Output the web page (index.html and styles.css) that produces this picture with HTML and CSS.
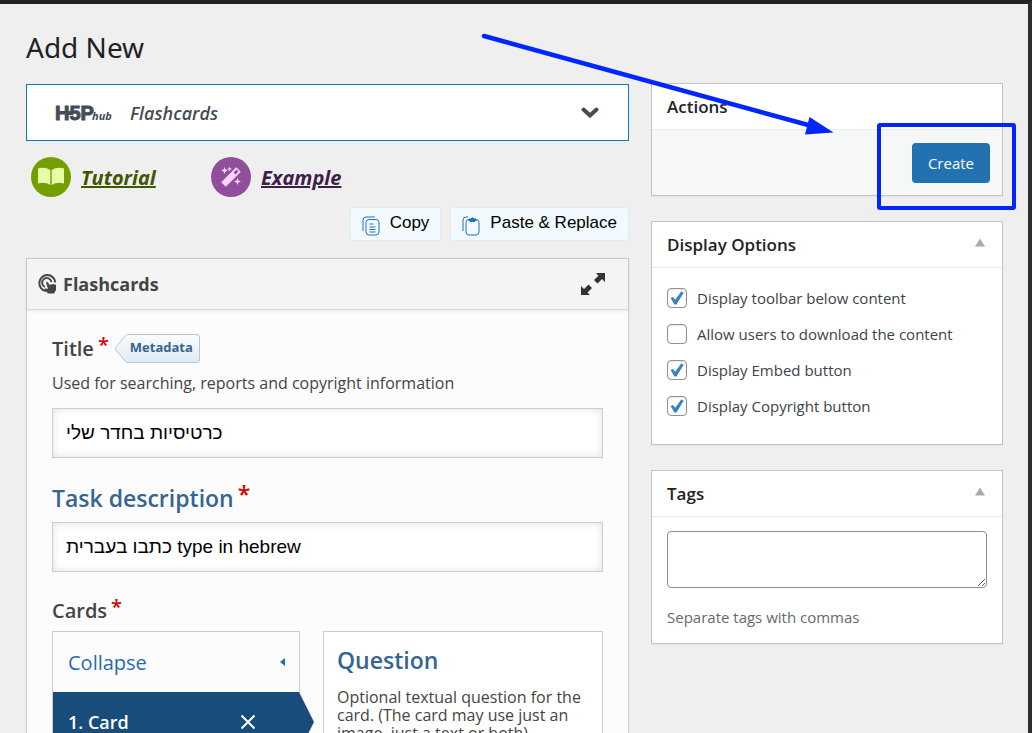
FILE: index.html
```html
<!DOCTYPE html>
<html lang="en">
<head>
    <meta charset="UTF-8">
    <meta name="viewport" content="width=device-width, initial-scale=1.0">
    <title>Add New</title>
    <link rel="stylesheet" href="styles.css">
</head>
<body>
    <div class="wrap">
        <h1>Add New</h1>
        <div class="columns">
            <main class="editor">
                <button class="hub" type="button">
                    <svg class="hub-logo" width="60" height="28" viewBox="0 0 60 28">
                        <path d="M11 12h7v4h-7z" fill="#454c57"/>
                        <text class="logo-big" x="0" y="21">H5P</text>
                        <text class="logo-hub" x="37" y="21">hub</text>
                    </svg>
                    <span class="hub-name">Flashcards</span>
                    <svg width="18" height="12" viewBox="0 0 18 12">
                        <path d="M2.500 2.500L9 8.500L15.500 2.500" fill="none" stroke="#454c57" stroke-width="4" stroke-linecap="round"/>
                    </svg>
                </button>

                <div class="help-links">
                    <a class="tutorial" href="#">
                        <svg width="40" height="40" viewBox="0 0 40 40">
                            <circle cx="20" cy="20" r="20" fill="#739f00"/>
                            <path d="M7 11.500Q14 9.500 19.300 13V28Q14 24.500 7 26.500ZM33 11.500Q26 9.500 20.700 13V28Q26 24.500 33 26.500Z" fill="#e6ffa6"/>
                        </svg>
                        <span>Tutorial</span>
                    </a>
                    <a class="example" href="#">
                        <svg width="40" height="40" viewBox="0 0 40 40">
                            <circle cx="20" cy="20" r="20" fill="#914f9b"/>
                            <path d="M12.500 27.500L27.500 12.500" stroke="#fad6ff" stroke-width="6.500"/>
                            <path d="M23.500 16.500L26.500 13.500" stroke="#914f9b" stroke-width="2.500"/>
                            <path d="M13.500 10l1 2.500 2.500 1-2.500 1-1 2.500-1-2.500-2.500-1 2.500-1zM18.500 9.500l.700 1.800 1.800.700-1.800.700-.700 1.800-.700-1.800-1.800-.700 1.800-.700zM26.500 21l1 2.500 2.500 1-2.500 1-1 2.500-1-2.500-2.500-1 2.500-1z" fill="#fad6ff"/>
                        </svg>
                        <span>Example</span>
                    </a>
                </div>

                <div class="clipboard">
                    <button type="button">
                        <svg width="18" height="20" viewBox="0 0 18 20" fill="none" stroke="#2371b5">
                            <path d="M1 15V4Q1 1 4 1H13"/>
                            <rect x="4" y="3.500" width="13" height="15.500" rx="3"/>
                            <path d="M7.500 8h4M7.500 11h6M7.500 13.500h6M7.500 16h6"/>
                        </svg>
                        <span>Copy</span>
                    </button>
                    <button type="button">
                        <svg width="18" height="20" viewBox="0 0 18 20" fill="none" stroke="#2371b5">
                            <path d="M1 15V4Q1 1 4 1H6"/>
                            <rect x="4" y="3.500" width="13" height="15.500" rx="3"/>
                            <path d="M7 3h2q1.500-2.500 3 0h2v1.500l-1 1H8l-1-1z" fill="#2371b5"/>
                        </svg>
                        <span>Paste &amp; Replace</span>
                    </button>
                </div>

                <section class="panel">
                    <header class="panel-header">
                        <svg width="20" height="20" viewBox="0 0 20 20" fill="none" stroke="#444" stroke-width="2">
                            <path d="M8 17A8 8 0 1 1 17.300 8.500"/>
                            <path d="M7 13A4.700 4.700 0 1 1 13.500 8" stroke-width="1.800"/>
                            <path d="M8 8.500q1-1.500 2 0l2 3 1-1.500 1.500.500 1-.700 1.200.900 1.300-.200V16l-2 3.500H10L6.500 15.500q0-1.500 1.500-1l2 .500z" fill="#444" stroke="none"/>
                        </svg>
                        <h2>Flashcards</h2>
                        <button class="fullscreen" type="button" aria-label="Fullscreen">
                            <svg width="24" height="24" viewBox="0 0 24 24" fill="#333">
                                <path d="M15 1h9v9l-3-3-4.500 4.500-3.500-3.500L17.500 3.700zM9 23H0v-9l3 3 4.500-4.500L11 16l-4.500 4.500z"/>
                            </svg>
                        </button>
                    </header>

                    <div class="panel-body">
                        <div class="field">
                            <div class="label-row">
                                <label for="title">Title<span class="required">*</span></label>
                                <button class="metadata" type="button">
                                    <svg width="13" height="29" viewBox="0 0 13 29">
                                        <defs>
                                            <linearGradient id="tag" x2="0" y2="1">
                                                <stop offset="0" stop-color="#fbfcfd"/>
                                                <stop offset="1" stop-color="#dfeaf2"/>
                                            </linearGradient>
                                        </defs>
                                        <path d="M13 .500Q11.500 .500 10.500 1.500L1 13Q0 14.500 1 16L10.500 27.500Q11.500 28.500 13 28.500" fill="url(#tag)" stroke="#b4c8d8"/>
                                    </svg>
                                    <span>Metadata</span>
                                </button>
                            </div>
                            <p class="description">Used for searching, reports and copyright information</p>
                            <input id="title" type="text" value="כרטיסיות בחדר שלי">
                        </div>

                        <div class="field">
                            <label class="important" for="task">Task description<span class="required">*</span></label>
                            <input id="task" type="text" value="כתבו בעברית type in hebrew">
                        </div>

                        <div class="field">
                            <h3>Cards<span class="required">*</span></h3>
                            <div class="cards">
                                <div class="card-list">
                                    <button class="collapse" type="button">
                                        Collapse
                                        <svg width="5" height="8" viewBox="0 0 5 8"><path d="M5 0v8L0 4z" fill="#1f6db3"/></svg>
                                    </button>
                                    <div class="card-tab">
                                        <span>1. Card</span>
                                        <button type="button" aria-label="Remove card">
                                            <svg width="16" height="16" viewBox="0 0 16 16"><path d="M1.500 1.500l13 13M14.500 1.500l-13 13" stroke="#fff" stroke-width="2"/></svg>
                                        </button>
                                    </div>
                                </div>
                                <div class="card-form">
                                    <h4>Question</h4>
                                    <p class="description">Optional textual question for the card. (The card may use just an image, just a text or both)</p>
                                </div>
                            </div>
                        </div>
                    </div>
                </section>
            </main>

            <aside class="sidebar">
                <section class="postbox actions">
                    <h2>Actions</h2>
                    <div class="action-bar">
                        <button class="create" type="button">Create</button>
                    </div>
                    <!-- arrow and frame pointing at the Create button -->
                    <svg class="callout" width="540" height="182" viewBox="0 0 540 182">
                        <path d="M4 4L330 93.500" stroke="#0026ff" stroke-width="4.500" stroke-linecap="round"/>
                        <path d="M329.500 85L353.500 100.500L325 102.500Z" fill="#0026ff"/>
                        <rect x="399" y="93" width="135" height="83" rx="1" fill="none" stroke="#0026ff" stroke-width="4"/>
                    </svg>
                </section>

                <section class="postbox">
                    <h2>Display Options <button class="toggle" type="button" aria-label="Toggle panel"></button></h2>
                    <div class="options">
                        <label><input type="checkbox" checked> Display toolbar below content</label>
                        <label><input type="checkbox"> Allow users to download the content</label>
                        <label><input type="checkbox" checked> Display Embed button</label>
                        <label><input type="checkbox" checked> Display Copyright button</label>
                    </div>
                </section>

                <section class="postbox">
                    <h2>Tags <button class="toggle" type="button" aria-label="Toggle panel"></button></h2>
                    <div class="tags">
                        <textarea id="tags" aria-label="Tags"></textarea>
                        <label class="howto" for="tags">Separate tags with commas</label>
                    </div>
                </section>
            </aside>
        </div>
    </div>
</body>
</html>
```
FILE: styles.css
```css
* {
    box-sizing: border-box;
}

body {
    margin: 0;
    height: 100vh;
    overflow: hidden;
    background-color: #efefef;
    color: #3c434a;
    font-family: "Open Sans", "Noto Sans", sans-serif;
    border-top: 4px solid #1d2327;
    border-right: 4px solid #2b2d2f;
}

button {
    font-family: inherit;
    cursor: pointer;
}

svg {
    flex: none;
}

h1, h2, h3, h4, p {
    margin: 0;
}

.wrap {
    padding: 23px 25px 0 26px;
}

h1 {
    color: #1d2327;
    font-family: "Noto Sans", sans-serif;
    font-size: 28px;
    font-weight: 400;
    line-height: 40px;
    margin-bottom: 16px;
}

.columns {
    display: grid;
    grid-template-columns: minmax(0, 1fr) 352px;
    gap: 22px;
    align-items: start;
}

/* Content type selector */
.hub {
    display: flex;
    align-items: center;
    width: 100%;
    height: 57px;
    margin-top: 1px;
    padding: 0 29px 0 28px;
    background-color: #fff;
    border: 1px solid #0a78d1;
}

.hub-logo {
    overflow: visible;
}

.logo-big, .logo-hub {
    fill: #454c57;
    font-family: "Liberation Sans", Arial, sans-serif;
    font-weight: 700;
    font-size: 20px;
}

.logo-big {
    stroke: #454c57;
    stroke-width: 1px;
}

.logo-hub {
    font-family: "Open Sans", sans-serif;
    font-size: 11px;
    font-style: italic;
}

.hub-name {
    flex: 1;
    margin-left: 15px;
    color: #454c57;
    font-size: 18px;
    font-style: italic;
    font-weight: 600;
    text-align: left;
}

.help-links {
    display: flex;
    padding: 16px 5px 0;
}

.help-links a {
    display: flex;
    align-items: center;
    gap: 10px;
    width: 180px;
    font-size: 20px;
    font-style: italic;
    font-weight: 700;
}

.tutorial {
    color: #3f5700;
}

.example {
    color: #3f1f4a;
}

.clipboard {
    display: flex;
    justify-content: flex-end;
    gap: 9px;
    margin: 10px 0 17px;
}

.clipboard button {
    display: flex;
    align-items: center;
    gap: 10px;
    height: 34px;
    padding: 0 11px 2px;
    background-color: #f2f9ff;
    border: 1px solid #deeeee;
    border-radius: 3px;
    font-family: "Liberation Sans", Arial, sans-serif;
    font-size: 17px;
}

.clipboard svg {
    margin-top: 5px;
}

/* Editor form */
.panel {
    background-color: #fcfcfc;
    border: 1px solid #ccc;
}

.panel-header {
    display: flex;
    align-items: center;
    gap: 5px;
    height: 51px;
    padding: 0 16px 0 11px;
    background-color: #f4f4f4;
    border-bottom: 1px solid #d9d9d9;
    box-shadow: 0 1px 4px rgba(0, 0, 0, 0.08);
    color: #444;
}

.panel-header h2 {
    flex: 1;
    font-size: 18px;
    font-weight: 700;
}

.fullscreen {
    display: flex;
    padding: 0 7px;
    background: none;
    border: none;
}

.panel-body {
    padding: 23px 25px;
}

.field {
    margin-bottom: 24px;
    color: #444;
}

.label-row {
    display: flex;
    align-items: center;
    gap: 6px;
    height: 31px;
}

.field label, .field h3 {
    display: block;
    font-size: 20px;
    font-weight: 600;
    line-height: 30px;
}

.field .important {
    color: #356593;
    font-size: 23px;
    line-height: 32px;
    margin-bottom: 8px;
}

.field h3 {
    margin-bottom: 5px;
}

.required {
    display: inline-block;
    margin-left: 4px;
    color: #da0001;
    line-height: 20px;
    vertical-align: 4px;
}

.metadata {
    display: flex;
    padding: 0;
    background: none;
    border: none;
    color: #356593;
    font-size: 13px;
    font-weight: 700;
}

.metadata span {
    height: 29px;
    padding: 0 6px 0 2px;
    background: linear-gradient(#fbfcfd, #dfeaf2);
    border: 1px solid #b4c8d8;
    border-left: none;
    border-radius: 0 4px 4px 0;
    line-height: 25px;
}

.description {
    font-size: 16px;
    line-height: 18px;
}

.field > .description {
    margin: 10px 0 16px;
}

.field input {
    display: block;
    width: 100%;
    height: 50px;
    padding: 0 13px;
    background-color: #fff;
    border: 1px solid #ccc;
    box-shadow: inset 0 0 8px rgba(0, 0, 0, 0.12);
    color: #000;
    font-family: "Liberation Sans", Arial, sans-serif;
    font-size: 19px;
}

.cards {
    display: grid;
    grid-template-columns: 248px minmax(0, 1fr);
    gap: 23px;
}

.card-list {
    border: 1px solid #ccc;
}

.collapse {
    display: flex;
    justify-content: space-between;
    align-items: center;
    width: 100%;
    height: 60px;
    padding: 0 14px 0 15px;
    background: none;
    border: none;
    color: #1f6db3;
    font-size: 20px;
}

.card-tab {
    display: flex;
    justify-content: space-between;
    align-items: center;
    height: 60px;
    margin-right: -15px;
    padding: 0 58px 0 15px;
    background-color: #184d7b;
    clip-path: polygon(0 0, calc(100% - 15px) 0, 100% 50%, calc(100% - 15px) 100%, 0 100%);
    color: #fff;
    font-size: 18px;
    font-weight: 600;
}

.card-tab button {
    display: flex;
    padding: 0;
    background: none;
    border: none;
}

.card-form {
    padding: 12px 13px;
    background-color: #fff;
    border: 1px solid #ccc;
}

.card-form h4 {
    margin-bottom: 12px;
    color: #356593;
    font-size: 23px;
    font-weight: 600;
    line-height: 32px;
}

/* Sidebar boxes */
.sidebar {
    display: grid;
    gap: 25px;
}

.postbox {
    position: relative;
    background-color: #fff;
    border: 1px solid #c3c4c7;
    box-shadow: 0 1px 1px rgba(0, 0, 0, 0.04);
}

.postbox h2 {
    display: flex;
    justify-content: space-between;
    align-items: center;
    height: 46px;
    padding: 0 17px 0 15px;
    border-bottom: 1px solid #eaeaec;
    color: #1d2327;
    font-size: 17px;
    font-weight: 600;
}

.action-bar {
    display: flex;
    justify-content: flex-end;
    padding: 13px 12px 12px;
    background-color: #f6f8f8;
}

.create {
    height: 40px;
    padding: 0 16px;
    background-color: #2271b1;
    border: none;
    border-radius: 4px;
    color: #fff;
    font-size: 15px;
}

.callout {
    position: absolute;
    top: -52px;
    right: -18px;
}

.toggle {
    width: 10px;
    height: 8px;
    margin-bottom: 4px;
    padding: 0;
    background-color: #a7aaad;
    border: none;
    clip-path: polygon(50% 0, 100% 100%, 0 100%);
}

.options {
    display: grid;
    gap: 12px;
    padding: 18px 15px 26px;
}

.options label {
    display: flex;
    align-items: center;
    gap: 10px;
    font-size: 15px;
    line-height: 24px;
}

.options input {
    appearance: none;
    width: 20px;
    height: 20px;
    margin: 0;
    background-color: #fff;
    border: 1px solid #8c8f94;
    border-radius: 4px;
    box-shadow: inset 0 1px 2px rgba(0, 0, 0, 0.1);
}

.options input:checked::before {
    content: "";
    display: block;
    width: 14px;
    height: 14px;
    margin: 2px;
    background-color: #3582c4;
    clip-path: polygon(4% 50%, 20% 42%, 38% 62%, 80% 4%, 98% 12%, 46% 96%, 32% 96%);
}

.tags {
    padding: 14px 15px;
}

.tags textarea {
    display: block;
    width: 100%;
    height: 57px;
    border: 1px solid #8c8f94;
    border-radius: 4px;
}

.howto {
    display: block;
    margin-top: 17px;
    color: #646970;
    font-size: 15px;
    line-height: 24px;
}
```
